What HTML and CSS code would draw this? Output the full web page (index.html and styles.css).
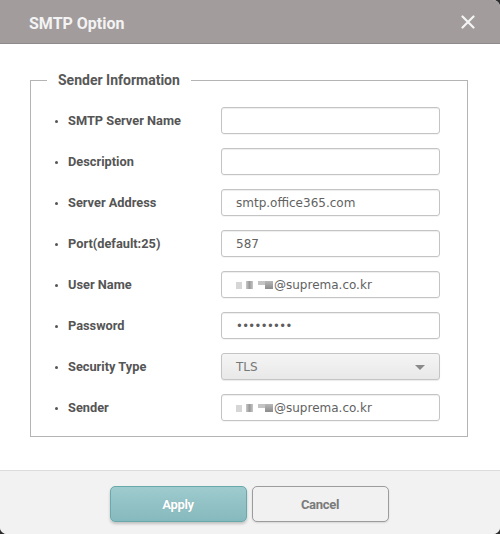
FILE: index.html
```html
<!DOCTYPE html>
<html>
<head>
<meta charset="utf-8">
<link rel="stylesheet" href="styles.css">
</head>
<body>
<div class="dialog">
  <div class="header">
    <span class="title">SMTP Option</span>
    <svg class="close" width="14" height="14" viewBox="0 0 14 14"><path d="M1.5 1.5 L12.5 12.5 M12.5 1.5 L1.5 12.5" stroke="#f4f4f4" stroke-width="2.2" stroke-linecap="round" fill="none"/></svg>
  </div>
  <div class="content">
    <fieldset class="group">
      <legend class="legend">Sender Information</legend>
      <div class="row"><label class="lbl">SMTP Server Name</label><div class="field"></div></div>
      <div class="row"><label class="lbl">Description</label><div class="field"></div></div>
      <div class="row"><label class="lbl">Server Address</label><div class="field">smtp.office365.com</div></div>
      <div class="row"><label class="lbl">Port(default:25)</label><div class="field">587</div></div>
      <div class="row"><label class="lbl">User Name</label><div class="field"><span class="blur"><i class="b1"></i><i class="b2"></i><i class="b3"></i><i class="b4"></i></span>@suprema.co.kr</div></div>
      <div class="row"><label class="lbl">Password</label><div class="field dots">•••••••••</div></div>
      <div class="row"><label class="lbl">Security Type</label><div class="field select">TLS<span class="arrow"></span></div></div>
      <div class="row"><label class="lbl">Sender</label><div class="field"><span class="blur"><i class="b1"></i><i class="b2"></i><i class="b3"></i><i class="b4"></i></span>@suprema.co.kr</div></div>
    </fieldset>
  </div>
  <div class="footer">
    <button class="btn apply">Apply</button>
    <button class="btn cancel">Cancel</button>
  </div>
</div>
</body>
</html>
```
FILE: styles.css
```css
html, body {
  margin: 0;
  padding: 0;
  background: #2e2e2e;
}
.dialog {
  width: 500px;
  height: 534px;
  display: flex;
  flex-direction: column;
  background: #fff;
  border-radius: 0 7px 7px 7px;
  overflow: hidden;
  font-family: Roboto, "Liberation Sans", sans-serif;
}
.header {
  height: 44px;
  flex: none;
  background: #a29c9d;
  display: flex;
  align-items: center;
  justify-content: space-between;
  padding: 0 25px 0 29px;
  border-bottom: 1px solid #8f8a8b;
  box-sizing: border-box;
}
.title {
  color: #f3f3f3;
  font-size: 16px;
  font-weight: 700;
  padding-top: 3px;
}
.close {
  display: block;
  margin-top: 1px;
}
.content {
  flex: 1;
  padding: 28px 32px 0 30px;
}
.group {
  margin: 0;
  border: 1px solid #b4b4b4;
  padding: 19px 27px 15px 24px;
  display: flex;
  flex-direction: column;
  gap: 14px;
}
.legend {
  margin-left: -8px;
  padding: 0 11px;
  font-size: 14px;
  font-weight: 700;
  color: #585858;
  line-height: 16px;
}
.row {
  display: flex;
  align-items: center;
  height: 27px;
}
.lbl {
  width: 166px;
  flex: none;
  font-size: 12.8px;
  font-weight: 700;
  color: #555;
  display: flex;
  align-items: center;
}
.lbl::before {
  content: "";
  width: 3px;
  height: 3px;
  border-radius: 50%;
  background: #555;
  margin-right: 10px;
  margin-top: 2px;
}
.field {
  flex: 1;
  height: 27px;
  box-sizing: border-box;
  border: 1px solid #c4c4c4;
  border-radius: 3px;
  box-shadow: inset 0 1px 1px rgba(0,0,0,0.07), 0 1px 0 rgba(0,0,0,0.04);
  padding: 0 0 0 14px;
  display: flex;
  align-items: center;
  font-family: "DejaVu Sans", Verdana, sans-serif;
  font-size: 12px;
  color: #626262;
}
.dots {
  font-size: 11.5px;
  letter-spacing: -0.6px;
  color: #5e5e5e;
}
.select {
  background: linear-gradient(#f5f5f5, #e8e8e8);
  justify-content: space-between;
  padding-right: 14px;
  color: #777;
  box-shadow: 0 1px 1px rgba(0,0,0,0.08);
}
.arrow {
  width: 0;
  height: 0;
  border-left: 5px solid transparent;
  border-right: 5px solid transparent;
  border-top: 5px solid #8a8a8a;
  margin-top: 2px;
}
.blur {
  display: inline-flex;
  align-items: flex-end;
  height: 8px;
  margin-right: 1px;
  margin-top: 1px;
}
.blur i {
  display: inline-block;
  height: 8px;
}
.blur .b1 { width: 6px; background: #d6d6d6; margin-right: 4px; height: 7px; }
.blur .b2 { width: 7px; background: linear-gradient(90deg, #c8c8c8, #9a9a9a, #c8c8c8); margin-right: 5px; }
.blur .b3 { width: 7px; background: #c4c4c4; height: 4px; align-self: flex-start; }
.blur .b4 { width: 8px; background: linear-gradient(#b8b8b8, #8c8c8c); }
.footer {
  height: 64px;
  flex: none;
  box-sizing: border-box;
  background: #f2f2f2;
  border-top: 1px solid #dcdcdc;
  display: flex;
  justify-content: center;
  align-items: flex-start;
  gap: 5px;
  padding-top: 15px;
  padding-right: 2px;
}
.btn {
  width: 137px;
  height: 36px;
  border-radius: 5px;
  font-family: Roboto, "Liberation Sans", sans-serif;
  font-size: 13px;
  font-weight: 700;
  letter-spacing: -0.3px;
}
.apply {
  background: linear-gradient(#9ecbce, #86b9bd);
  border: 1px solid #6aa9aa;
  color: #fff;
  box-shadow: 0 2px 3px rgba(0,0,0,0.2);
  text-shadow: 0 0 1px rgba(0,0,0,0.15);
}
.cancel {
  background: #f1f1f1;
  border: 1px solid #9c9c9c;
  color: #7a7a7a;
  box-shadow: 0 1px 2px rgba(0,0,0,0.12);
}
```
